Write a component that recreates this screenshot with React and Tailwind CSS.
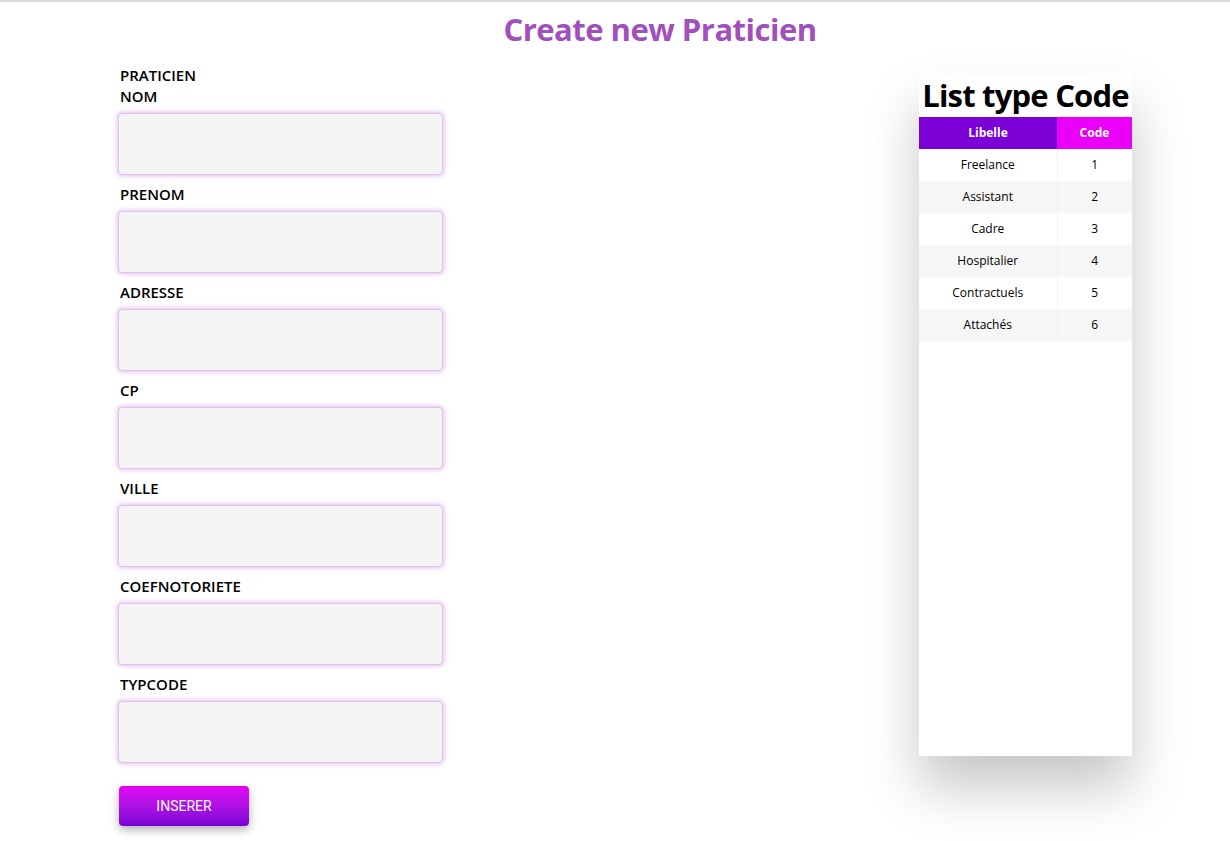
import React from "react";

const fields = ["NOM", "PRENOM", "ADRESSE", "CP", "VILLE", "COEFNOTORIETE", "TYPCODE"];

const types = [
  { libelle: "Freelance", code: 1 },
  { libelle: "Assistant", code: 2 },
  { libelle: "Cadre", code: 3 },
  { libelle: "Hospitalier", code: 4 },
  { libelle: "Contractuels", code: 5 },
  { libelle: "Attachés", code: 6 },
];

const App = () => {
  return (
    <div
      className="min-h-[841px] bg-white border-t-2 border-[#dadada] text-black"
      style={{ fontFamily: '"Open Sans", "Noto Sans", sans-serif' }}
    >
      <h1 className="text-center text-[31px] leading-[40px] font-bold text-[#a04fbd] mt-[7px] pl-[90px] tracking-[-0.5px]">
        Create new Praticien
      </h1>

      <div className="flex justify-between pl-[119px] pr-[98px] mt-[16px]">
        {/* form */}
        <form className="flex flex-col w-[325px]">
          <span className="text-[15px] leading-[21px] font-semibold ml-px">PRATICIEN</span>
          {fields.map((f, i) => (
            <div key={f} className={i === 0 ? "flex flex-col" : "flex flex-col mt-[9px]"}>
              <label htmlFor={f} className="text-[15px] leading-[21px] font-semibold ml-px">
                {f}
              </label>
              <input
                id={f}
                type="text"
                className="mt-[6px] -ml-px h-[62px] w-[325px] rounded-[4px] bg-[#f4f4f4] border border-[#e2c2ec] shadow-[0_0_4px_1px_rgba(190,110,220,0.45)] outline-none"
              />
            </div>
          ))}
          <button
            type="submit"
            className="mt-[23px] w-[130px] h-[40px] rounded-[4px] bg-gradient-to-b from-[#e400f4] to-[#7a00d4] text-white text-[14px] shadow-[0_4px_10px_rgba(0,0,0,0.3)]"
            style={{ fontFamily: "Roboto, sans-serif" }}
          >
            INSERER
          </button>
        </form>

        {/* list */}
        <div className="w-[213px] h-[683px] mt-[8px] bg-white shadow-[0_32px_50px_rgba(0,0,0,0.22)] flex flex-col">
          <h2 className="text-[31px] leading-[44px] font-bold text-center whitespace-nowrap tracking-[-0.8px]">
            List type Code
          </h2>
          <table className="w-full text-[12px] border-collapse">
            <thead>
              <tr className="h-[32px] text-white font-bold">
                <th className="w-[138px] bg-[#7a00d6] font-bold">Libelle</th>
                <th className="bg-[#ea00f6] font-bold">Code</th>
              </tr>
            </thead>
            <tbody>
              {types.map((t, i) => (
                <tr key={t.code} className={i % 2 === 0 ? "h-[32px] bg-white" : "h-[32px] bg-[#f6f6f6]"}>
                  <td className="text-center border-r border-[#f0f0f0]">{t.libelle}</td>
                  <td className="text-center">{t.code}</td>
                </tr>
              ))}
            </tbody>
          </table>
        </div>
      </div>
    </div>
  );
};

export default App;
